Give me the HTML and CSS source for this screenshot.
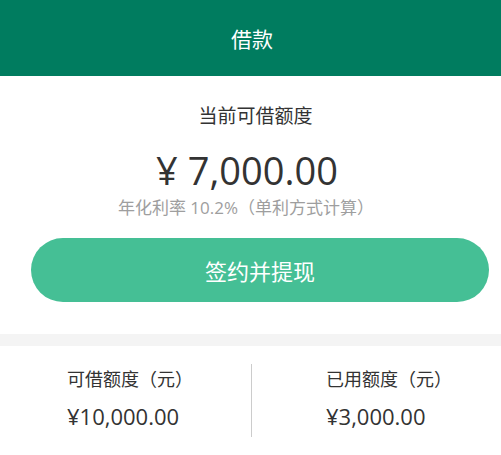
FILE: index.html
```html
<!DOCTYPE html>
<html lang="zh-CN">
<head>
  <meta charset="UTF-8">
  <meta name="viewport" content="width=device-width, initial-scale=1.0">
  <title>借款</title>
  <link rel="stylesheet" href="styles.css">
</head>
<body>
  <div class="page-header">借款</div>

  <div class="quota-card">
    <div class="quota-title">当前可借额度</div>
    <div class="quota-amount">¥ 7,000.00</div>
    <div class="quota-rate">年化利率 10.2%（单利方式计算）</div>
    <button class="sign-button">签约并提现</button>
  </div>

  <div class="gap-band"></div>

  <div class="quota-summary">
    <div class="summary-col">
      <div class="summary-label">可借额度（元）</div>
      <div class="summary-value">¥10,000.00</div>
    </div>
    <div class="summary-col summary-col-right">
      <div class="summary-label">已用额度（元）</div>
      <div class="summary-value">¥3,000.00</div>
    </div>
  </div>
</body>
</html>
```

FILE: styles.css
```css
* {
  box-sizing: border-box;
  margin: 0;
  padding: 0;
  font-family: "Open Sans", "Noto Sans CJK SC", sans-serif;
}

body {
  background-color: #ffffff;
  width: 501px;
  color: #333333;
}

.page-header {
  height: 76px;
  display: flex;
  align-items: center;
  justify-content: center;
  padding-left: 3px;
  background-color: #007c5f;
  color: #ffffff;
  font-size: 21px;
}

.quota-card {
  padding: 26px 0 32px;
  text-align: center;
}

.quota-title {
  font-size: 19px;
  line-height: 28px;
  color: #333333;
  padding-left: 10px;
}

.quota-amount {
  margin-top: 16px;
  padding-right: 7px;
  font-size: 38px;
  line-height: 48px;
  color: #333333;
}

.quota-rate {
  margin-top: 2px;
  padding-right: 9px;
  font-size: 17px;
  line-height: 24px;
  color: #9e9e9e;
}

.sign-button {
  display: block;
  width: 458px;
  height: 64px;
  margin: 18px 0 0 31px;
  border: none;
  border-radius: 32px;
  background-color: #45bf95;
  color: #ffffff;
  font-size: 22px;
  cursor: pointer;
}

.gap-band {
  height: 12px;
  background-color: #f4f4f4;
}

.quota-summary {
  display: flex;
  padding: 18px 0;
}

.summary-col {
  flex: 0 0 251px;
  height: 73px;
  padding-left: 67px;
}

.summary-col-right {
  flex: 1;
  border-left: 1px solid #cccccc;
  padding-left: 74px;
}

.summary-label {
  font-size: 18px;
  line-height: 30px;
}

.summary-value {
  margin-top: 7px;
  font-size: 22px;
  line-height: 30px;
}
```
